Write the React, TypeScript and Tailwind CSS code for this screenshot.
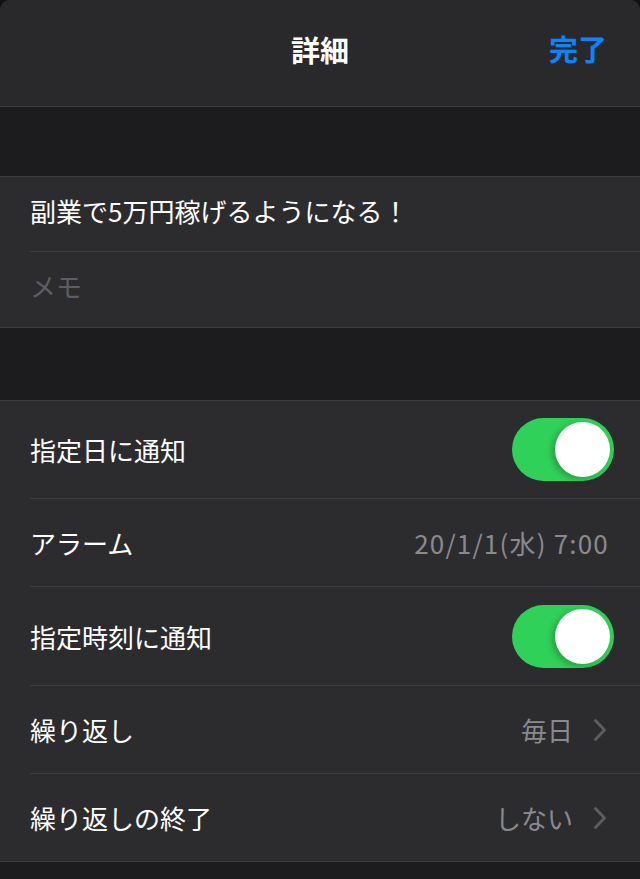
const font = { fontFamily: '"Noto Sans CJK JP", "Noto Sans", sans-serif' };

function Toggle() {
  return (
    <div className="flex h-[63px] w-[102px] items-center justify-end rounded-full bg-[#30d158] pr-[4px]">
      <div className="h-[55px] w-[55px] rounded-full bg-white shadow-[-3px_2px_6px_rgba(0,0,0,0.25)]" />
    </div>
  );
}

function Chevron() {
  return (
    <svg width="14" height="24" viewBox="0 0 14 24" fill="none" className="text-[#5c5c60]">
      <path d="M2.5 2.5 L11.5 12 L2.5 21.5" stroke="currentColor" strokeWidth="3" strokeLinecap="round" strokeLinejoin="round" />
    </svg>
  );
}

function Row({
  label,
  value,
  chevron,
  toggle,
  height,
  last,
  wide,
}: {
  label: string;
  value?: string;
  chevron?: boolean;
  toggle?: boolean;
  height: string;
  last?: boolean;
  wide?: boolean;
}) {
  return (
    <div className="pl-[30px]">
      <div
        className={`flex items-center justify-between ${height} ${
          toggle ? "pr-[26px]" : chevron ? "pr-[33px]" : "pr-[31px]"
        } ${last ? "" : "border-b border-[#3d3d40]"}`}
      >
        <span className="text-[26px] text-white">{label}</span>
        {toggle && <Toggle />}
        {value && (
          <div className="flex items-center gap-[20px]">
            <span className={`text-[26px] text-[#8a8a8e] ${wide ? "tracking-[1.2px]" : ""}`}>{value}</span>
            {chevron && <Chevron />}
          </div>
        )}
      </div>
    </div>
  );
}

export default function App() {
  return (
    <div className="min-h-[879px] w-[640px] bg-[#111112]" style={font}>
      <div className="overflow-hidden rounded-t-[10px] bg-[#1c1c1e] pb-[18px]">
        <header className="relative flex h-[107px] items-center justify-center border-b border-[#3d3d40] bg-[#29292b] pb-[6px]">
          <h1 className="text-[29px] font-bold text-white">詳細</h1>
          <button className="absolute right-[33px] top-[27px] text-[29px] font-bold text-[#0a84ff]">
            完了
          </button>
        </header>

        <div className="h-[69px]" />

        <section className="border-y border-[#3d3d40] bg-[#2c2c2e]">
          <div className="pl-[30px]">
            <div className="flex h-[75px] items-center border-b border-[#3d3d40] pb-[8px] text-[26px] text-white">
              副業で5万円稼げるようになる！
            </div>
          </div>
          <div className="flex h-[75px] items-center pb-[8px] pl-[30px] text-[26px] text-[#5e5e62]">メモ</div>
        </section>

        <div className="h-[72px]" />

        <section className="border-y border-[#3d3d40] bg-[#2c2c2e]">
          <Row label="指定日に通知" toggle height="h-[98px]" />
          <Row label="アラーム" value="20/1/1(水) 7:00" wide height="h-[88px]" />
          <Row label="指定時刻に通知" toggle height="h-[99px]" />
          <Row label="繰り返し" value="毎日" chevron height="h-[88px]" />
          <Row label="繰り返しの終了" value="しない" chevron height="h-[87px]" last />
        </section>
      </div>
    </div>
  );
}
